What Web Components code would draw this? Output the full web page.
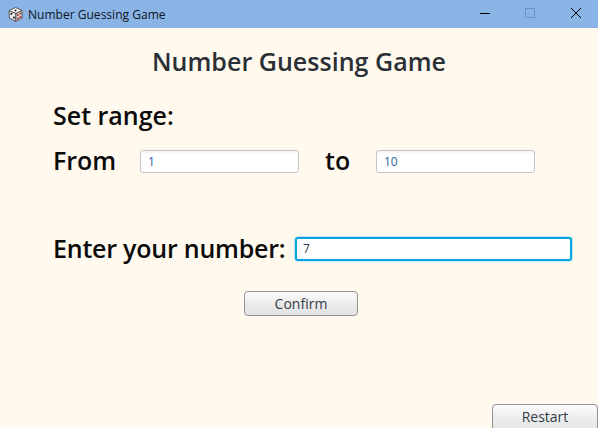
<!DOCTYPE html>
<html>
<head>
<meta charset="utf-8">
<title>Number Guessing Game</title>
<style>
  html, body { margin: 0; height: 100%; overflow: hidden; }
  body { font-family: "Open Sans", "Noto Sans", sans-serif; }
</style>
</head>
<body>
<game-window caption="Number Guessing Game">
  <game-title>Number Guessing Game</game-title>
  <game-label class="range">Set range:</game-label>
  <game-row style="--row-top:9px">
    <game-label style="width:87px">From</game-label>
    <game-field value="1" style="width:159px"></game-field>
    <game-label style="margin-left:26px;width:51px">to</game-label>
    <game-field value="10" style="width:159px"></game-field>
  </game-row>
  <game-row style="--row-top:52px">
    <game-label style="width:242px;letter-spacing:-.22px">Enter your number:</game-label>
    <game-field value="7" focused style="width:277px"></game-field>
  </game-row>
  <game-button style="margin:24px 0 0 191px;width:114px;height:25px">Confirm</game-button>
  <game-button slot="corner" style="width:106px;height:30px">Restart</game-button>
</game-window>

<script>
  class GameWindow extends HTMLElement {
    constructor() {
      super();
      const shadow = this.attachShadow({mode: "open"});
      shadow.innerHTML = `
        <style>
          :host {
            display: flex;
            flex-direction: column;
            width: 598px;
            height: 428px;
            overflow: hidden;
            background: #fff9ee;
          }
          .bar {
            flex: none;
            height: 28px;
            display: flex;
            align-items: center;
            background: #8ab4e6;
            color: #10151f;
            font: 12px "Open Sans", sans-serif;
            letter-spacing: .02px;
          }
          .dice { margin-left: 8px; width: 15px; height: 15px; flex: none; }
          .caption { margin-left: 5px; flex: 1; }
          .ctl { width: 46px; height: 28px; flex: none; display: block; }
          .body { flex: 1; display: flex; flex-direction: column; padding: 0 0 0 53px; min-height: 0; position: relative; }
          .corner { position: absolute; right: 0; top: 376px; }
        </style>
        <div class="bar">
          <svg class="dice" viewBox="0 0 15 15">
            <path d="M7.5 .5 L14 3.4 L8 6.6 L1 3.6 Z" fill="#fbf9f7" stroke="#4a4848" stroke-width=".9"/>
            <path d="M1 3.6 L8 6.6 L7.7 14.5 L1.4 11 Z" fill="#f2efef" stroke="#4a4848" stroke-width=".9"/>
            <path d="M8 6.6 L14 3.4 L14.2 10.8 L7.7 14.5 Z" fill="#d9d2d2" stroke="#4a4848" stroke-width=".9"/>
            <circle cx="7.5" cy="3.5" r="1.1" fill="#222"/>
            <circle cx="3.4" cy="6.8" r="1.1" fill="#222"/>
            <circle cx="5.9" cy="10.6" r="1.1" fill="#222"/>
            <circle cx="9.8" cy="8" r="1" fill="#a8302c"/>
            <circle cx="12.4" cy="6.6" r="1" fill="#a8302c"/>
            <circle cx="9.8" cy="11.6" r="1" fill="#a8302c"/>
            <circle cx="12.4" cy="10" r="1" fill="#a8302c"/>
          </svg>
          <span class="caption">${this.getAttribute("caption")}</span>
          <svg class="ctl" viewBox="0 0 46 28" style="margin-right:1px"><path d="M21 13.5H31" stroke="#000" fill="none"/></svg>
          <svg class="ctl" viewBox="0 0 46 28"><rect x="19.5" y="8.5" width="9" height="9" stroke="#6d92c0" fill="none"/></svg>
          <svg class="ctl" viewBox="0 0 46 28"><path d="M19 8L29 18M29 8L19 18" stroke="#000" fill="none"/></svg>
        </div>
        <div class="body">
          <slot></slot>
          <div class="corner"><slot name="corner"></slot></div>
        </div>
      `;
    }
  }

  class GameTitle extends HTMLElement {
    constructor() {
      super();
      const shadow = this.attachShadow({mode: "open"});
      shadow.innerHTML = `
        <style>
          :host {
            display: block;
            margin: 14px 0 0 -53px;
            height: 38px;
            line-height: 38px;
            text-align: center;
            font-size: 25px;
            font-weight: 600;
            letter-spacing: .03px;
            color: #2b2f36;
          }
        </style>
        <slot></slot>
      `;
    }
  }

  class GameLabel extends HTMLElement {
    constructor() {
      super();
      const shadow = this.attachShadow({mode: "open"});
      shadow.innerHTML = `
        <style>
          :host {
            display: block;
            flex: none;
            height: 36px;
            line-height: 35px;
            font-size: 25px;
            font-weight: 600;
            color: #0b0b0b;
            white-space: nowrap;
          }
          :host(.range) { margin-top: 18px; }
        </style>
        <slot></slot>
      `;
    }
  }

  class GameRow extends HTMLElement {
    constructor() {
      super();
      const shadow = this.attachShadow({mode: "open"});
      shadow.innerHTML = `
        <style>
          :host {
            display: flex;
            align-items: center;
            margin-top: var(--row-top, 0);
          }
        </style>
        <slot></slot>
      `;
    }
  }

  class GameField extends HTMLElement {
    constructor() {
      super();
      const shadow = this.attachShadow({mode: "open"});
      shadow.innerHTML = `
        <style>
          :host {
            display: block;
            flex: none;
            box-sizing: border-box;
            height: 23px;
            padding-left: 7px;
            background: linear-gradient(#f3f3f3, #fff 4px);
            border: 1px solid #c4c4c4;
            border-radius: 3px;
            font: 12px/21px "Open Sans", sans-serif;
            color: #2d63a0;
          }
          :host([focused]) {
            height: 24px;
            line-height: 20px;
            padding-left: 6px;
            background: #fff;
            border: 2px solid #0aa5e0;
            color: #2a3550;
            box-shadow: 0 0 0 1px #c5e8f6;
          }
        </style>
        <span>${this.getAttribute("value")}</span>
      `;
    }
  }

  class GameButton extends HTMLElement {
    constructor() {
      super();
      const shadow = this.attachShadow({mode: "open"});
      shadow.innerHTML = `
        <style>
          :host {
            display: block;
            flex: none;
            box-sizing: border-box;
            text-align: center;
            background: linear-gradient(#fbfbfb, #ececec 50%, #e2e2e2);
            border: 1px solid #939393;
            border-radius: 4px;
            font-size: 14px;
            line-height: 23px;
            color: #333c48;
          }
        </style>
        <slot></slot>
      `;
    }
  }

  customElements.define("game-window", GameWindow);
  customElements.define("game-title", GameTitle);
  customElements.define("game-label", GameLabel);
  customElements.define("game-row", GameRow);
  customElements.define("game-field", GameField);
  customElements.define("game-button", GameButton);
</script>
</body>
</html>
